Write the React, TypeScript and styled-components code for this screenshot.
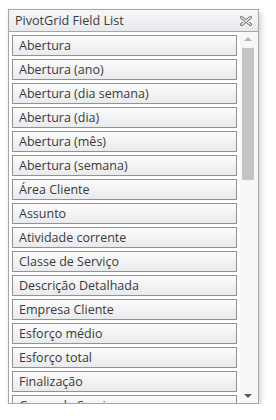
import styled, { createGlobalStyle } from "styled-components"

const GlobalStyle = createGlobalStyle`
  html, body {
    margin: 0;
    padding: 0;
    background: #ffffff;
    font-family: "Open Sans", "Noto Sans", Arial, sans-serif;
  }
`

const Page = styled.div`
  padding: 9px 0 0 8px;
`

const Panel = styled.div`
  width: 251px;
  height: 395px;
  box-sizing: border-box;
  border: 1px solid #a3a6ab;
  background: #ffffff;
  box-shadow: 2px 3px 6px rgba(0, 0, 0, 0.18);
  display: flex;
  flex-direction: column;
`

const Header = styled.div`
  height: 21px;
  flex-shrink: 0;
  display: flex;
  align-items: center;
  justify-content: space-between;
  padding: 0 6px 0 6px;
  border-bottom: 1px solid #a3a6ab;
  background: linear-gradient(#f6f7f8, #e7e9ec);
  color: #3b3b3b;
  font-size: 12.6px;
`

const CloseButton = styled.svg`
  width: 12px;
  height: 10px;
  display: block;
`

const Body = styled.div`
  flex: 1;
  display: flex;
  min-height: 0;
`

const List = styled.div`
  flex: 1;
  overflow: hidden;
  padding: 3px 3px 0 3px;
  display: flex;
  flex-direction: column;
  gap: 3px;
`

const Item = styled.div`
  height: 21px;
  flex-shrink: 0;
  box-sizing: border-box;
  border: 1px solid #8f9296;
  background: linear-gradient(#fbfbfb, #e9eaec);
  color: #3a3a3a;
  font-size: 12.5px;
  line-height: 19px;
  padding-left: 6px;
  white-space: nowrap;
`

const Scrollbar = styled.div`
  width: 16px;
  flex-shrink: 0;
  display: flex;
  flex-direction: column;
  align-items: center;
  padding: 0 2px 0 0;
  background: #f7f7f7;
`

const Arrow = styled.div<{ down?: boolean }>`
  height: 14px;
  display: flex;
  align-items: center;
  justify-content: center;
  &::before {
    content: "";
    border-left: 4px solid transparent;
    border-right: 4px solid transparent;
    ${(p) =>
      p.down
        ? "border-top: 4px solid #5a5a5a;"
        : "border-bottom: 4px solid #b5b5b5;"}
  }
`

const Track = styled.div`
  flex: 1;
  width: 12px;
`

const Thumb = styled.div`
  margin-top: 2px;
  height: 132px;
  width: 12px;
  background: #c3c3c3;
`

const fields = [
  "Abertura",
  "Abertura (ano)",
  "Abertura (dia semana)",
  "Abertura (dia)",
  "Abertura (mês)",
  "Abertura (semana)",
  "Área Cliente",
  "Assunto",
  "Atividade corrente",
  "Classe de Serviço",
  "Descrição Detalhada",
  "Empresa Cliente",
  "Esforço médio",
  "Esforço total",
  "Finalização",
  "Grupo de Serviço",
]

export default function App() {
  return (
    <>
      <GlobalStyle />
      <Page>
        <Panel>
          <Header>
            <span>PivotGrid Field List</span>
            <CloseButton viewBox="0 0 12 10">
              <path
                d="M1.5 1.5 L10.5 8.5 M10.5 1.5 L1.5 8.5"
                stroke="#707070"
                strokeWidth="3"
                strokeLinecap="round"
              />
              <path
                d="M1.5 1.5 L10.5 8.5 M10.5 1.5 L1.5 8.5"
                stroke="#f4f5f6"
                strokeWidth="1.2"
                strokeLinecap="round"
              />
            </CloseButton>
          </Header>
          <Body>
            <List>
              {fields.map((f) => (
                <Item key={f}>{f}</Item>
              ))}
            </List>
            <Scrollbar>
              <Arrow />
              <Track>
                <Thumb />
              </Track>
              <Arrow down />
            </Scrollbar>
          </Body>
        </Panel>
      </Page>
    </>
  )
}
